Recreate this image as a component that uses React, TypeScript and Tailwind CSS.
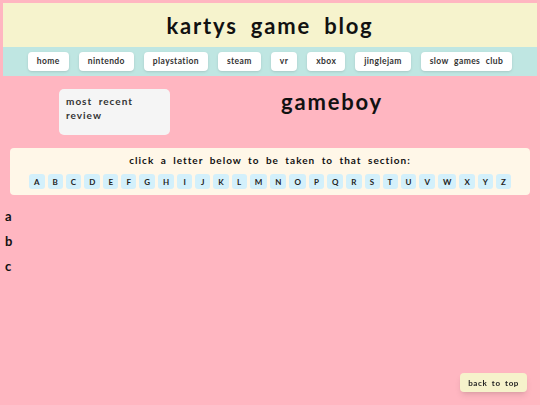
const navItems = [
  "home",
  "nintendo",
  "playstation",
  "steam",
  "vr",
  "xbox",
  "jinglejam",
  "slow games club",
];

const letters = "ABCDEFGHIJKLMNOPQRSTUVWXYZ".split("");

const sections = ["a", "b", "c"];

const App = () => {
  return (
    <div
      id="top"
      className="min-h-screen bg-[#ffb6c1] pt-[3px] font-['Lato',sans-serif] font-bold text-[#111]"
    >
      <header className="mx-[3px]">
        <div className="flex h-[44px] items-center justify-center bg-[#f6f3cd]">
          <h1 className="whitespace-nowrap text-[22px] tracking-[1.8px] [word-spacing:6px]">
            kartys game blog
          </h1>
        </div>
        <nav className="flex h-[29px] items-center justify-center gap-[10px] bg-[#bfe6e2]">
          {navItems.map((item) => (
            <a
              key={item}
              href="#"
              className="flex h-[19px] items-center whitespace-nowrap rounded-[4px] bg-white px-[9px] text-[8.5px] tracking-[0.4px] text-[#333] [word-spacing:3px] shadow-sm"
            >
              {item}
            </a>
          ))}
        </nav>
      </header>

      <div className="mt-[13px] flex">
        <aside className="ml-[59px] h-[46px] w-[111px] rounded-[5px] bg-[#f5f5f5] px-[7px] pt-[5px]">
          <p className="text-[10px] leading-[14px] tracking-[1px] text-[#333] [word-spacing:3px]">
            most recent review
          </p>
        </aside>
        <div className="flex flex-1 justify-center pr-[46px]">
          <h2 className="-mt-[4px] text-[22px] tracking-[1.8px]">gameboy</h2>
        </div>
      </div>

      <div className="mx-[10px] mt-[13px] flex h-[47px] flex-col items-center rounded-[4px] bg-[#fff7e8] pt-[5px]">
        <p className="whitespace-nowrap text-[10px] leading-[14px] tracking-[1px] [word-spacing:3px]">
          click a letter below to be taken to that section:
        </p>
        <div className="mt-[7px] flex gap-[3px]">
          {letters.map((l) => (
            <a
              key={l}
              href={"#" + l.toLowerCase()}
              className="flex h-[15px] min-w-[15px] items-center justify-center rounded-[3px] bg-[#d3f0fb] px-[5px] text-[8px] text-[#222]"
            >
              {l}
            </a>
          ))}
        </div>
      </div>

      <div className="mt-[9px] pl-[5px]">
        {sections.map((s) => (
          <h3 key={s} id={s} className="text-[13px] leading-[25px]">
            {s}
          </h3>
        ))}
      </div>

      <a
        href="#top"
        className="fixed bottom-[13px] right-[13px] flex h-[19px] items-center whitespace-nowrap rounded-[4px] bg-[#f6f2cb] px-[8px] text-[8px] tracking-[0.6px] text-[#222] [word-spacing:2px] shadow-md"
      >
        back to top
      </a>
    </div>
  );
};

export default App;
